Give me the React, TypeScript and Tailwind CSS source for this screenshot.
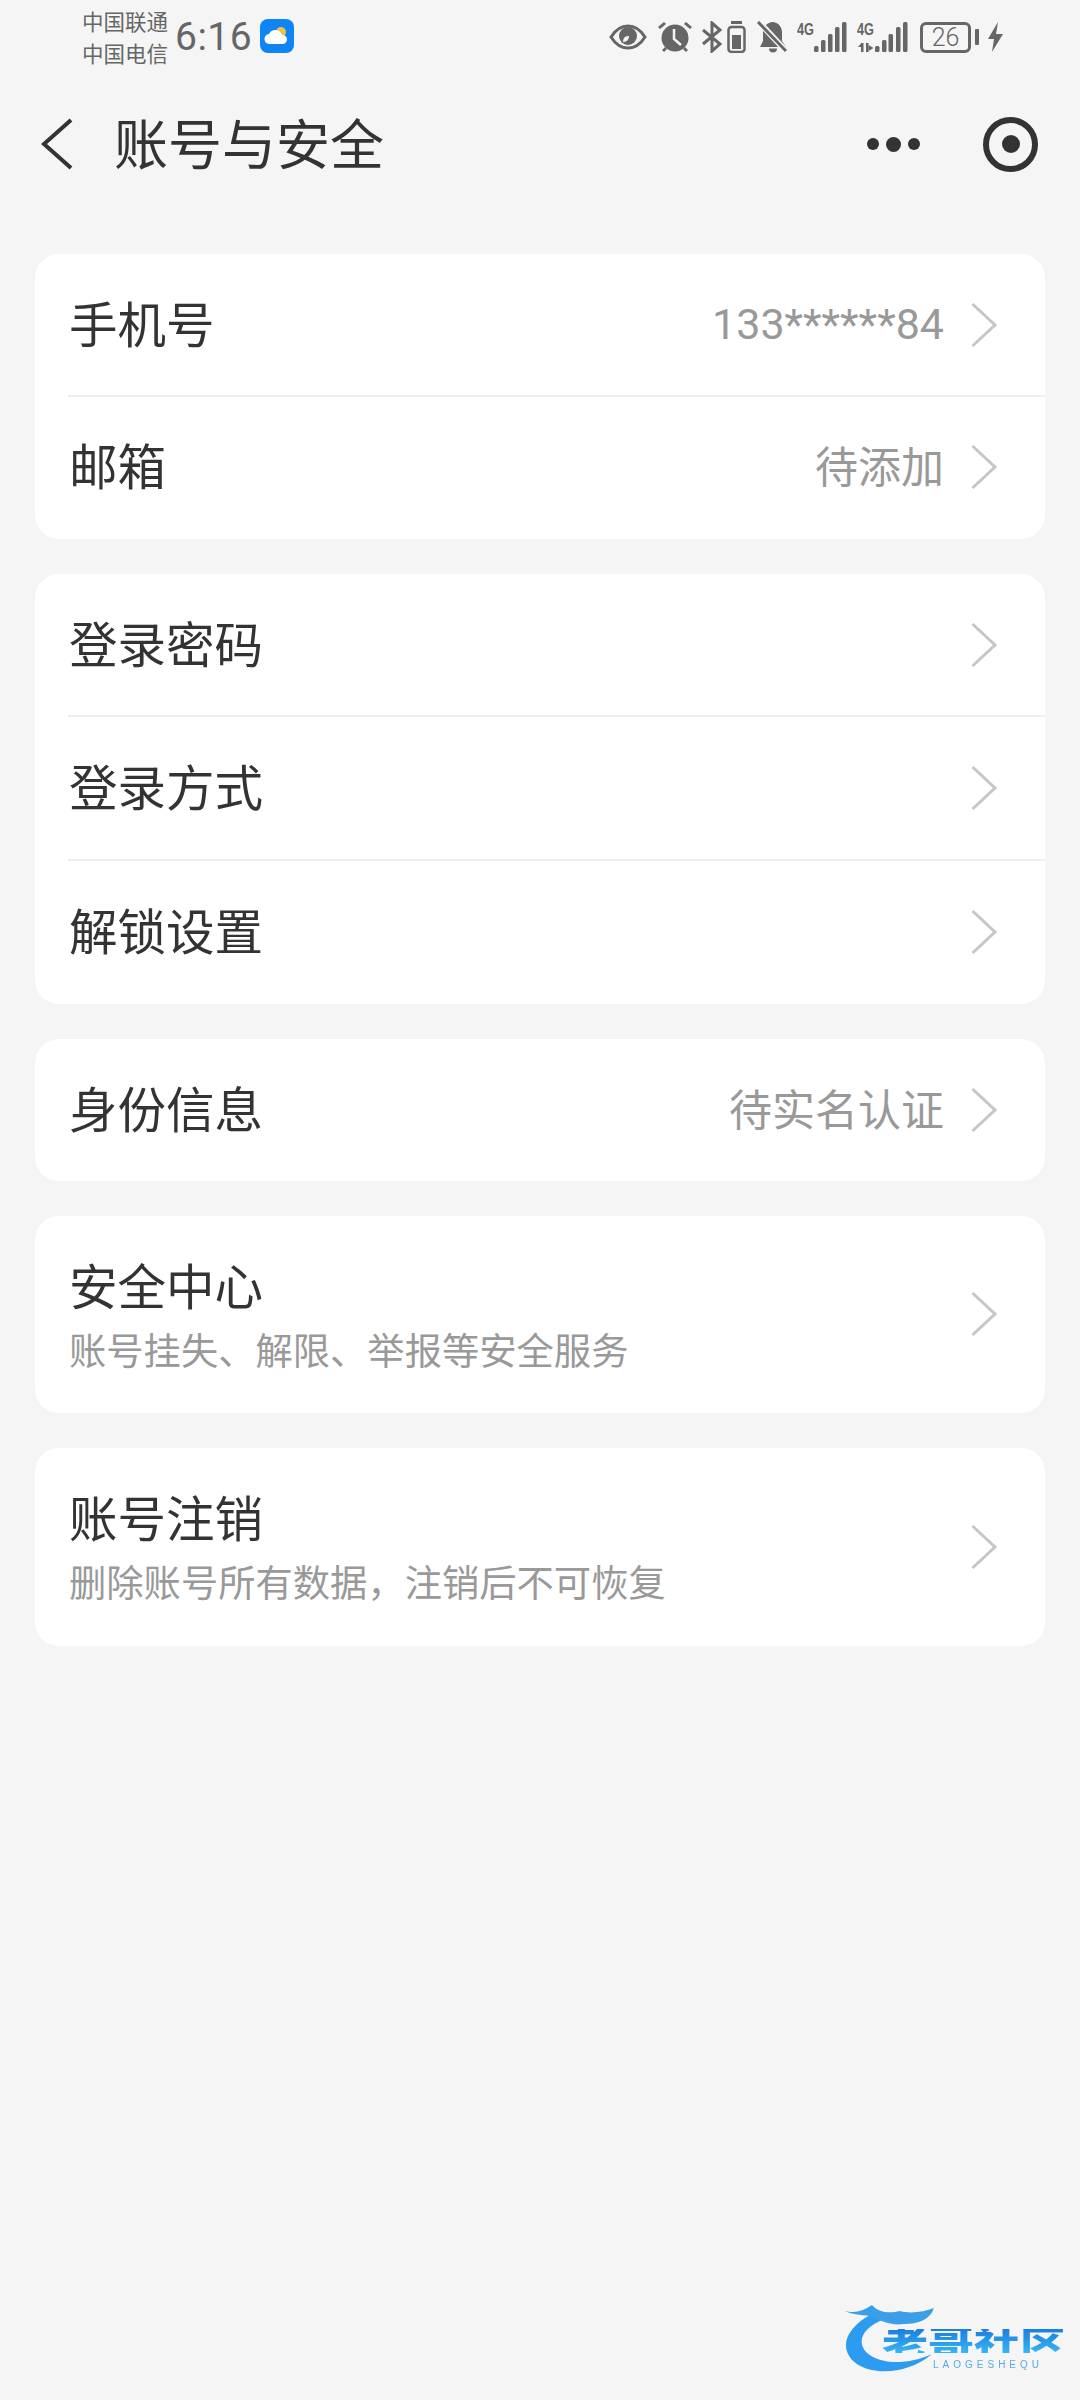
import React from "react";

const CJK = "font-['Noto_Sans_CJK_SC','Noto_Sans',sans-serif]";

function Chevron() {
  return (
    <svg width="28" height="46" viewBox="0 0 28 46" className="shrink-0" fill="none">
      <path d="M2.5 2 L25 23 L2.5 44" stroke="#c6c6c6" strokeWidth="3" />
    </svg>
  );
}

function Row({ title, value, sub, divider, numeric }: { title: string; value?: string; sub?: string; divider?: boolean; numeric?: boolean }) {
  return (
    <div className="relative flex-1 flex items-center pl-[34px] pr-[47px] pb-[1px]">
      <div className={`flex-1 min-w-0 ${sub ? "pb-[3px]" : "pb-[6px]"}`}>
        <div className="text-[48.500px] leading-[60px] text-[#333333]">{title}</div>
        {sub && <div className="text-[37.300px] leading-[46px] mt-[12px] text-[#999999]">{sub}</div>}
      </div>
      {value && (
        <div className={`leading-[56px] text-[#999999] mr-[26px] ${numeric ? "font-['Roboto',sans-serif] text-[43px] pb-[2px]" : "text-[43px] pb-[6px]"}`}>{value}</div>
      )}
      <Chevron />
      {divider && <div className="absolute left-[33px] right-0 bottom-0 h-[2px] bg-[#eeeeee]" />}
    </div>
  );
}

function Card({ children, h }: { children: React.ReactNode; h: string }) {
  return <div className={`bg-white rounded-[24px] overflow-hidden flex flex-col ${h}`}>{children}</div>;
}

function Signal({ second }: { second?: boolean }) {
  const xs = second ? [18, 25, 31.5, 39, 46] : [17, 24, 31, 38, 45];
  const tops = [25, 19, 13, 6, 1];
  return (
    <svg width="51" height="36" viewBox="0 -4 51 36" className="shrink-0 mb-[4px]" fill="#666666">
      <text x="0" y="14" fontSize="17" fontWeight="700" textLength="17" lengthAdjust="spacingAndGlyphs" fontFamily="'Liberation Sans',sans-serif">4G</text>
      {xs.map((x, i) => (
        <rect key={i} x={x} y={tops[i]} width="4.500" height={31 - tops[i]} rx="1.500" />
      ))}
      {second && (
        <g>
          <rect x="4" y="22" width="2.500" height="9" />
          <path d="M1 26l3.500-4v4z" />
          <rect x="9" y="22" width="2.500" height="9" />
          <path d="M11.500 24l5 3-5 3z" />
        </g>
      )}
    </svg>
  );
}

function StatusBar() {
  return (
    <div className="h-[74px] flex items-center pl-[82px] pr-[77px] text-[#666666]">
      <div className="text-[21.500px] leading-[32px] w-[93px]">
        <div>中国联通</div>
        <div>中国电信</div>
      </div>
      <div className="text-[39px] leading-[44px] font-['Roboto',sans-serif] tracking-[0.5px] w-[85px]">6:16</div>
      <svg width="34" height="34" viewBox="0 0 34 34" className="shrink-0 mb-[2px]">
        <rect width="34" height="34" rx="8" fill="#0f84f5" />
        <circle cx="21" cy="13" r="5" fill="#f4c04a" />
        <path d="M10 25a5 5 0 0 1-1-10 7 7 0 0 1 13 1 4.500 4.500 0 0 1 1 9z" fill="#ffffff" />
      </svg>
      <div className="flex-1" />
      <div className="flex items-center">
        <svg width="38" height="26" viewBox="0 0 38 26" className="shrink-0" fill="none">
          <path d="M2 13C7 5 13 2 19 2s12 3 17 11c-5 8-11 11-17 11S7 21 2 13z" stroke="#666666" strokeWidth="3" />
          <circle cx="19" cy="12" r="9" fill="#666666" />
          <path d="M14 18c0-4 2-6 6-6 0 3-2 6-6 6z" fill="#f5f5f5" />
        </svg>
        <svg width="36" height="32" viewBox="0 0 36 32" className="shrink-0 ml-[10px]" fill="#666666">
          <circle cx="18" cy="17" r="13.500" />
          <path d="M1 6l6-5 2 2-6 5zM35 6l-6-5-2 2 6 5zM5 29l3-3 2 2-3 3zM31 29l-3-3-2 2 3 3z" />
          <path d="M17 8v10l7 6" stroke="#f5f5f5" strokeWidth="2.500" fill="none" />
        </svg>
        <svg width="20" height="32" viewBox="0 0 20 32" className="shrink-0 ml-[9px]" fill="none">
          <path d="M1 9l17 14-8 7V2l8 7L1 23" stroke="#666666" strokeWidth="3" />
        </svg>
        <svg width="19" height="32" viewBox="0 0 19 32" className="shrink-0 ml-[5px]" fill="none">
          <rect x="4" y="0" width="11" height="3" fill="#666666" />
          <rect x="1.500" y="6" width="16" height="25" rx="3" stroke="#666666" strokeWidth="2.500" />
          <rect x="5" y="14" width="9" height="14" fill="#666666" />
        </svg>
        <svg width="30" height="32" viewBox="0 0 30 32" className="shrink-0 ml-[11px]" fill="#666666">
          <path d="M16 1c6 1 9 5 9 11v8l4 6H3l3-6v-8C6 6 10 1 16 1z" />
          <path d="M12 27.500a4 4 0 0 0 8 0z" />
          <path d="M2 1l26 28" stroke="#f5f5f5" strokeWidth="6" />
          <path d="M1 1l28 29" stroke="#666666" strokeWidth="3" />
        </svg>
        <div className="ml-[10px] flex"><Signal /></div>
        <div className="ml-[9px] flex"><Signal second /></div>
        <div className="ml-[12px] w-[51px] h-[31px] border-[3px] border-[#666666] rounded-[6px] flex items-center justify-center text-[25px] leading-none font-['Roboto',sans-serif] font-light text-[#666666]">26</div>
        <div className="ml-[4px] w-[4px] h-[16px] bg-[#666666] rounded-[1px]" />
        <svg width="15" height="30" viewBox="0 0 15 30" className="shrink-0 ml-[9px]" fill="#666666">
          <path d="M10 0L0 17h6l-2 13L15 12H8z" />
        </svg>
      </div>
    </div>
  );
}

function Logo() {
  return (
    <div className="absolute left-[840px] top-[2302px] w-[236px] h-[72px] blur-[0.7px]">
      <svg width="100" height="72" viewBox="0 0 100 72" className="absolute left-0 top-0" fill="none">
        <path d="M30 13 C10 24 -2 42 12 58 C28 74 66 74 92 52 C66 64 38 62 26 50 C16 38 24 26 42 18 Z" fill="#2d9bf0" />
        <path d="M3 8 C12 12 22 10 32 3 C38 10 48 12 60 9 C70 12 84 10 94 6 C90 18 78 22 64 22 C50 24 40 18 30 14 C20 13 10 12 3 8Z" fill="#3a9fe8" />
      </svg>
      <div className="absolute left-[42px] top-[22px] origin-left w-[194px] text-[46px] leading-[34px] h-[34px] font-black bg-gradient-to-b from-[#1d7ce0] to-[#38b6f5] bg-clip-text text-transparent whitespace-nowrap scale-y-[0.72]">老哥社区</div>
      <div className="absolute left-[93px] top-[58px] text-[10px] leading-[10px] tracking-[4px] text-[#5aa9e6] font-['Liberation_Sans',sans-serif] whitespace-nowrap">LAOGESHEQU</div>
    </div>
  );
}

export default function App() {
  return (
    <div className={`relative w-[1080px] h-[2400px] bg-[#f5f5f5] overflow-hidden ${CJK}`}>
      <StatusBar />
      <div className="h-[140px] flex items-center">
        <svg width="32" height="52" viewBox="0 0 32 52" className="shrink-0 ml-[41px]" fill="none">
          <path d="M30 2 L3 26 L30 50" stroke="#333333" strokeWidth="4" />
        </svg>
        <div className="ml-[41px] pb-[5px] text-[54px] leading-[64px] text-[#333333] flex-1">账号与安全</div>
        <div className="flex items-center gap-[7px]">
          <div className="w-[12px] h-[12px] rounded-full bg-[#333333]" />
          <div className="w-[15px] h-[15px] rounded-full bg-[#333333]" />
          <div className="w-[12px] h-[12px] rounded-full bg-[#333333]" />
        </div>
        <div className="ml-[63px] mr-[42px] w-[55px] h-[55px] rounded-full border-[6px] border-[#333333] flex items-center justify-center">
          <div className="w-[18px] h-[18px] rounded-full bg-[#333333]" />
        </div>
      </div>
      <div className="mt-[40px] mx-[35px] flex flex-col gap-[35px]">
        <Card h="h-[285px]">
          <Row title="手机号" value="133******84" numeric divider />
          <Row title="邮箱" value="待添加" />
        </Card>
        <Card h="h-[430px]">
          <Row title="登录密码" divider />
          <Row title="登录方式" divider />
          <Row title="解锁设置" />
        </Card>
        <Card h="h-[142px]">
          <Row title="身份信息" value="待实名认证" />
        </Card>
        <Card h="h-[197px]">
          <Row title="安全中心" sub="账号挂失、解限、举报等安全服务" />
        </Card>
        <Card h="h-[198px]">
          <Row title="账号注销" sub="删除账号所有数据，注销后不可恢复" />
        </Card>
      </div>
      <Logo />
    </div>
  );
}
